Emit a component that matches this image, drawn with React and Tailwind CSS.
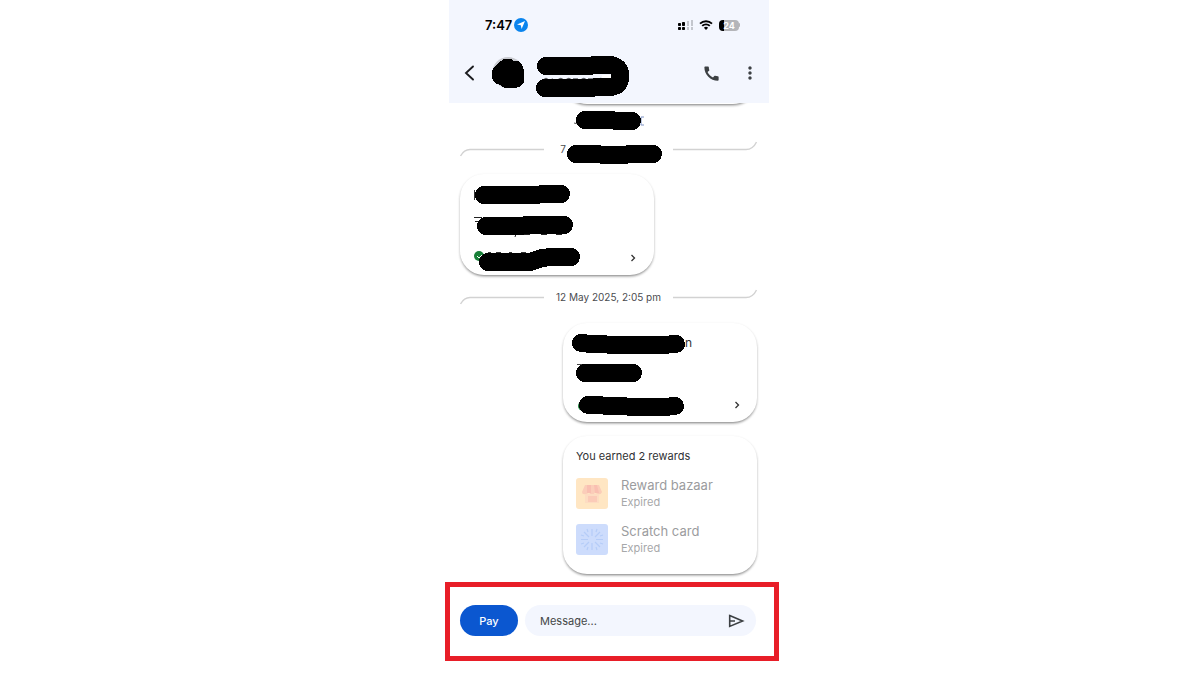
import React from 'react';
import { MdCall, MdMoreVert } from 'react-icons/md';

function Scribble({ w, h, d, stroke = 18, label, children }) {
  return (
    <svg width={w} height={h} viewBox={`0 0 ${w} ${h}`} className="block shrink-0" role="img" aria-label={label}>
      {children}
      <path d={d} fill="none" stroke="#000" strokeWidth={stroke} strokeLinecap="round" strokeLinejoin="round" shapeRendering="crispEdges" />
    </svg>
  );
}

function StatusBar() {
  return (
    <div className="flex h-[18px] items-center pl-9 pr-[29px]">
      <span className="text-[13px] leading-[18px] font-semibold text-black">7:47</span>
      <svg width="14" height="14" viewBox="0 0 14 14" className="ml-[2px]" aria-hidden="true">
        <circle cx="7" cy="7" r="7" fill="#0a84ee" />
        <path d="M11 3 7.6 11 6.8 7.3 3 6.5Z" fill="#fff" />
      </svg>
      <div className="ml-auto flex items-center gap-[6px]">
        <svg width="16" height="10" viewBox="0 0 16 10" aria-hidden="true">
          <g fill="#000">
            <rect x="1" y="3" width="3" height="3" rx="0.8" />
            <rect x="5" y="2" width="3" height="4" rx="0.8" />
            <rect x="1" y="7" width="3" height="3" rx="0.8" />
            <rect x="5" y="7" width="3" height="3" rx="0.8" />
          </g>
          <g fill="#c3c6cd">
            <rect x="10" y="1" width="2" height="5" />
            <rect x="14" y="0" width="2" height="6" />
            <rect x="10" y="7" width="2" height="3" />
            <rect x="14" y="7" width="2" height="3" />
          </g>
        </svg>
        <svg width="14" height="10" viewBox="0 0 14 10" aria-hidden="true">
          <path d="M1 3.600A8.800 8.800 0 0 1 13 3.600M3.200 5.900A5.600 5.600 0 0 1 10.800 5.900" fill="none" stroke="#000" strokeWidth="1.9" />
          <path d="M7 10 4.900 7.700A3.100 3.100 0 0 1 9.100 7.700Z" fill="#000" />
        </svg>
        <div className="flex items-center">
          <div className="flex h-[11px] w-5 items-center justify-center rounded-[4px] bg-[linear-gradient(90deg,#000_25%,#b4b5b9_25%)] text-[9px] leading-[11px] font-bold text-white">24</div>
          <span className="h-1 w-px rounded-r bg-[#b4b5b9]" />
        </div>
      </div>
    </div>
  );
}

function Toolbar() {
  return (
    <div className="flex h-[50px] items-center pl-[15px]">
      <button type="button" aria-label="Back" className="h-4 w-[11px]">
        <svg width="11" height="16" viewBox="0 0 11 16">
          <path d="M9 1.5 2 8l7 6.5" fill="none" stroke="#1b1c1f" strokeWidth="1.9" strokeLinecap="round" />
        </svg>
      </button>
      <svg width="34" height="34" viewBox="0 0 34 34" className="ml-4" role="img" aria-label="Contact">
        <circle cx="17" cy="16.500" r="15.500" fill="#c8cad0" />
        <path d="M7 7 10 5 13 3 20 3 23 5 28 5 31 9 33 14 33 20 33 26 28 31 24 32 14 32 9 29 4 27 1 22 1 17 2 12Z" fill="#000" shapeRendering="crispEdges" />
      </svg>
      <div className="ml-[11px] pt-[6px]">
        <Scribble w={94} h={44} d="M10 12H54L58 11H74Q84 12 84 21V25Q83 32 74 33H60L56 34H9" label="Contact name">
          <path d="M8 26q2-3 4 0M15 26l2-1M22 26q3-3 5 0M30 26q3-3 5 0M37 25h5M45 26q3-3 5 0M52 25h6M62 26q3-3 5 0M70 26q3-3 5 0" fill="none" stroke="#5c5f66" strokeWidth="1.4" />
          <path d="M66 21h9v5h-9z" fill="#fff" />
        </Scribble>
      </div>
      <button type="button" aria-label="Call" className="ml-auto text-[#3c4043]"><MdCall size={19} /></button>
      <button type="button" aria-label="More options" className="mr-[9px] ml-[19px] text-[#3c4043]"><MdMoreVert size={20} /></button>
    </div>
  );
}

function Divider({ children }) {
  return (
    <div className="flex h-5 items-center">
      <svg width="84" height="18" viewBox="0 0 84 18" aria-hidden="true">
        <path d="M.5 16Q4 9.500 10 9.500H84" fill="none" stroke="#d2d2d2" strokeWidth="1.400" />
      </svg>
      <div className="flex flex-1 items-center justify-center text-[10px] leading-5 text-[#4a4c50]">{children}</div>
      <svg width="84" height="18" viewBox="0 0 84 18" aria-hidden="true">
        <path d="M0 9.500H73Q80 9.500 83.500 2" fill="none" stroke="#d2d2d2" strokeWidth="1.400" />
      </svg>
    </div>
  );
}

function Card({ className = '', children }) {
  return (
    <section className={`w-[194px] rounded-[24px] bg-white shadow-[0_2px_3px_-1px_rgba(0,0,0,0.45),0_1px_3px_rgba(0,0,0,0.12)] ${className}`}>
      {children}
    </section>
  );
}

function Chevron() {
  return (
    <svg width="6" height="8" viewBox="0 0 6 8" className="mb-1" aria-hidden="true">
      <path d="M1.500 1 4.500 4 1.500 7" fill="none" stroke="#333" strokeWidth="1.3" />
    </svg>
  );
}

function Reward({ title, children }) {
  return (
    <li className="flex items-center gap-[13px]">
      <svg width="32" height="32" viewBox="0 0 32 32" aria-hidden="true">{children}</svg>
      <div>
        <p className="text-[13px] leading-[18px] text-[#9b9c9e]">{title}</p>
        <p className="text-[11px] leading-[17px] text-[#a7a8aa]">Expired</p>
      </div>
    </li>
  );
}

export default function App() {
  return (
    <div className="min-h-screen bg-white pl-6 font-['Inter','Liberation_Sans',sans-serif]">
      <main className="mx-auto max-w-[334px]">
        <div className="mr-[10px] ml-1">
          <header className="bg-[#f3f6fe] pt-4 pb-[5px]">
            <StatusBar />
            <div className="pt-[14px]"><Toolbar /></div>
          </header>

          <div className="flex flex-col overflow-hidden pr-3 pb-2 pl-[11px]">
            <Card className="-mt-[47px] h-12 self-end" />
            <div className="mt-[7px] pl-[114px]">
              <a href="#details" className="block w-[70px]">
                <Scribble w={70} h={20} d="M11 9H38L42 10H58" label="Link">
                  <path d="M0 12q2 1 4 0" fill="none" stroke="#555" />
                  <path d="M70 6h-3v8h3" fill="none" stroke="#7f93c4" />
                </Scribble>
              </a>
            </div>
            <div className="mt-2">
              <Divider>
                <div className="flex w-full items-center justify-end pr-[10px]">
                  <span>7</span>
                  <div className="pt-3">
                    <Scribble w={97} h={20} d="M10 9H30L38 10H58L64 9H87" label="Date" />
                  </div>
                </div>
              </Divider>
            </div>

            <Card className="mt-[15px] self-start px-[14px] pt-[11px] pb-[3px]">
              <Scribble w={98} h={20} d="M10 10H36L60 10 72 9H87" label="Payment title">
                <path d="M.500 5v10" stroke="#333" />
              </Scribble>
              <div className="mt-[10px]">
                <Scribble w={100} h={23} d="M12 11H46L54 10H90" label="Amount">
                  <path d="M0 2.500h8M1 6.500h6M16 19.500h4M27 19.500h4M42 19l-1 3M50 19.500h6M67 19.500h6M82 19.500h6" stroke="#222" strokeWidth="1" />
                </Scribble>
              </div>
              <div className="mt-[9px] flex items-center justify-between pr-1">
                <Scribble w={106} h={25} d="M14 15H56L68 11 78 10H97" label="Status">
                  <circle cx="5" cy="9" r="5" fill="#188038" />
                  <path d="M3 9 5 11 8 8" fill="none" stroke="#fff" />
                  <path d="M14 5.500h3M22 5.500h5M35 5.500h3M47 5.500h5" stroke="#333" />
                </Scribble>
                <Chevron />
              </div>
            </Card>

            <div className="mt-3">
              <Divider><time dateTime="2025-05-12T14:05">12 May 2025, 2:05 pm</time></Divider>
            </div>

            <Card className="mt-4 self-end px-[9px] pt-[10px] pb-1">
              <div className="flex items-start">
                <Scribble w={113} h={24} d="M9 10 20 11 50 12H90L104 11" label="Payment title" />
                <span className="text-[12px] leading-5 text-[#333]">n</span>
              </div>
              <div className="mt-[6px] pl-1">
                <Scribble w={68} h={20} d="M9 10H49L57 10" label="Amount">
                  <path d="M1 1.500h6M12 18.500h4M25 18.500h4M38 18.500h4" stroke="#444" />
                </Scribble>
              </div>
              <div className="mt-[13px] flex items-center justify-between pr-2 pl-[5px]">
                <Scribble w={108} h={22} d="M11 9 40 10 60 11H88L98 10" label="Status">
                  <circle cx="6" cy="10" r="5" fill="#188038" />
                </Scribble>
                <Chevron />
              </div>
            </Card>

            <Card className="mt-[14px] self-end px-[13px] pt-3 pb-[17px]">
              <h2 className="text-[11px] leading-[17px] text-[#303134]">You earned 2 rewards</h2>
              <ul className="mt-[11px] flex flex-col gap-[11px]">
                <Reward title="Reward bazaar">
                  <rect width="32" height="31" rx="3" fill="#ffe6c3" />
                  <path d="M9 7H23L26 14Q25 17 22 16L19 15 16 17 13 15 10 16Q6 17 6 14Z" fill="#fbcdb9" />
                  <path d="M11 7h4v8h-4zM18 7h3l2 8h-4z" fill="#f9bfb1" />
                  <path d="M9 16h14v9H9z" fill="#fddcc2" />
                  <rect x="12" y="18" width="9" height="6" fill="#fbcbb8" />
                </Reward>
                <Reward title="Scratch card">
                  <rect width="32" height="31" rx="3" fill="#cddcfc" />
                  <path d="M16 5v7M16 19v7M5 15.500h7M20 15.500h7M8 8l5 5M19 18l5 5M24 8l-5 5M13 18l-5 5M11 5l1 3M21 5l-1 3M11 26l1-3M21 26l-1-3M5 11l3 1M27 11l-3 1M5 20l3-1M27 20l-3-1" fill="none" stroke="#b5ccf8" strokeWidth="1.2" />
                </Reward>
              </ul>
            </Card>
          </div>
        </div>

        <form className="flex h-[79px] items-center gap-[7px] border-[5px] border-[#e81e28] pr-[18px] pb-[2px] pl-[10px]" onSubmit={(e) => e.preventDefault()}>
          <button type="button" className="h-[31px] w-[58px] rounded-full bg-[#0b57d0] text-[11px] leading-4 font-medium text-white">Pay</button>
          <div className="flex h-[31px] min-w-0 flex-1 items-center rounded-full bg-[#f3f6fe] pr-[11px] pl-[15px]">
            <input type="text" aria-label="Message" placeholder="Message..." className="min-w-0 flex-1 bg-transparent text-[11px] leading-4 text-[#444746] outline-none placeholder:text-[#444746]" />
            <button type="submit" aria-label="Send">
              <svg width="17" height="14" viewBox="0 0 17 14" className="block">
                <path d="M1.700 1.600 14.600 7 1.700 12.400Z M2 7H7" fill="none" stroke="#3c4043" strokeWidth="1.600" />
              </svg>
            </button>
          </div>
        </form>
      </main>
    </div>
  );
}
